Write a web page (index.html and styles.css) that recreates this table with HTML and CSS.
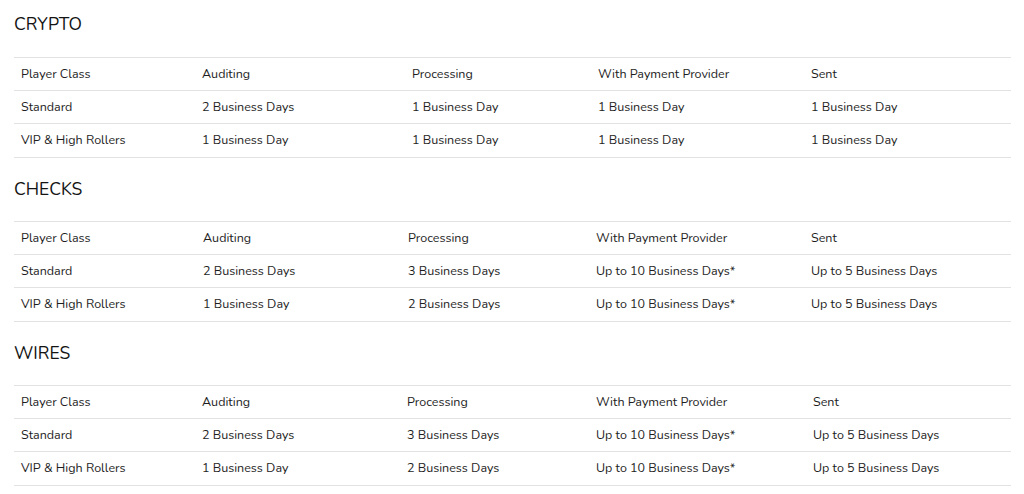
FILE: index.html
```html
<!DOCTYPE html>
<html lang="en">
<head>
<meta charset="utf-8">
<title>Payout Times</title>
<link rel="stylesheet" href="styles.css">
</head>
<body>
<main class="page">
  <section class="method">
    <h2 class="method-title">CRYPTO</h2>
    <table class="times t-crypto">
      <colgroup><col class="c1"><col class="c2"><col class="c3"><col class="c4"><col class="c5"></colgroup>
      <tbody>
        <tr><td>Player Class</td><td>Auditing</td><td>Processing</td><td>With Payment Provider</td><td>Sent</td></tr>
        <tr><td>Standard</td><td>2 Business Days</td><td>1 Business Day</td><td>1 Business Day</td><td>1 Business Day</td></tr>
        <tr><td>VIP &amp; High Rollers</td><td>1 Business Day</td><td>1 Business Day</td><td>1 Business Day</td><td>1 Business Day</td></tr>
      </tbody>
    </table>
  </section>
  <section class="method">
    <h2 class="method-title">CHECKS</h2>
    <table class="times t-checks">
      <colgroup><col class="c1"><col class="c2"><col class="c3"><col class="c4"><col class="c5"></colgroup>
      <tbody>
        <tr><td>Player Class</td><td>Auditing</td><td>Processing</td><td>With Payment Provider</td><td>Sent</td></tr>
        <tr><td>Standard</td><td>2 Business Days</td><td>3 Business Days</td><td>Up to 10 Business Days*</td><td>Up to 5 Business Days</td></tr>
        <tr><td>VIP &amp; High Rollers</td><td>1 Business Day</td><td>2 Business Days</td><td>Up to 10 Business Days*</td><td>Up to 5 Business Days</td></tr>
      </tbody>
    </table>
  </section>
  <section class="method">
    <h2 class="method-title">WIRES</h2>
    <table class="times t-wires">
      <colgroup><col class="c1"><col class="c2"><col class="c3"><col class="c4"><col class="c5"></colgroup>
      <tbody>
        <tr><td>Player Class</td><td>Auditing</td><td>Processing</td><td>With Payment Provider</td><td>Sent</td></tr>
        <tr><td>Standard</td><td>2 Business Days</td><td>3 Business Days</td><td>Up to 10 Business Days*</td><td>Up to 5 Business Days</td></tr>
        <tr><td>VIP &amp; High Rollers</td><td>1 Business Day</td><td>2 Business Days</td><td>Up to 10 Business Days*</td><td>Up to 5 Business Days</td></tr>
      </tbody>
    </table>
  </section>
</main>
</body>
</html>
```

FILE: styles.css
```css
* { box-sizing: border-box; }
html, body { margin: 0; padding: 0; background: #ffffff; }
body {
  font-family: "Nunito", "Lato", "Open Sans", sans-serif;
  color: #1e1e1e;
}
.page {
  padding: 12px 13px 0 14px;
}
.method-title {
  margin: 0 0 21px 0;
  font-size: 17.5px;
  line-height: 24px;
  font-weight: 400;
  color: #141414;
}
.method + .method .method-title { margin: 19px 0 20px 0; }
.times {
  width: 100%;
  border-collapse: collapse;
  table-layout: fixed;
  font-size: 12.5px;
  border-bottom: 1px solid #e2e2e2;
}
.times tr { border-top: 1px solid #e2e2e2; }
.times td {
  height: 33px;
  padding: 0 7px 2px 7px;
  vertical-align: middle;
  white-space: nowrap;
}
.times tr:last-child td { height: 34px; }
.t-crypto .c1 { width: 181px; }
.t-crypto .c2 { width: 210px; }
.t-crypto .c3 { width: 186px; }
.t-crypto .c4 { width: 213px; }
.t-checks .c1 { width: 182px; }
.t-checks .c2 { width: 205px; }
.t-checks .c3 { width: 188px; }
.t-checks .c4 { width: 215px; }
.t-wires .c1 { width: 181px; }
.t-wires .c2 { width: 205px; }
.t-wires .c3 { width: 189px; }
.t-wires .c4 { width: 217px; }
```
